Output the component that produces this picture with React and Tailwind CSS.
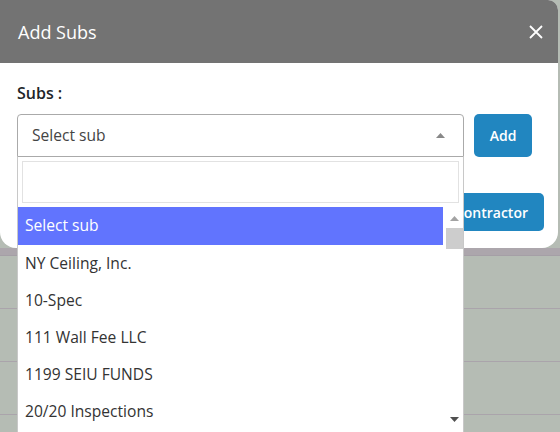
const subs = [
  "Select sub",
  "NY Ceiling, Inc.",
  "10-Spec",
  "111 Wall Fee LLC",
  "1199 SEIU FUNDS",
  "20/20 Inspections",
];

function ArrowUp({ color }) {
  return (
    <svg width="9" height="5" viewBox="0 0 9 5">
      <polygon points="4.5,0 9,5 0,5" fill={color} />
    </svg>
  );
}

function ArrowDown({ color }) {
  return (
    <svg width="9" height="5" viewBox="0 0 9 5">
      <polygon points="0,0 9,0 4.5,5" fill={color} />
    </svg>
  );
}

export default function App() {
  return (
    <div className="relative w-[560px] h-[432px] overflow-hidden bg-[#b5bcb4] font-['Open_Sans',sans-serif]">
      {/* page behind the modal */}
      <div className="h-[248px]" />
      <div className="h-[8px] bg-[#aca6ac] border-b border-[#a59fa6]" />
      {[0, 1, 2, 3].map((i) => (
        <div key={i} className="h-[53px] border-b border-[#aaa4ab]" />
      ))}

      {/* modal */}
      <div className="absolute left-0 top-0 w-[558px] h-[248px] bg-white rounded-tr-[10px] rounded-b-[16px] overflow-hidden">
        <div className="h-[63px] bg-[#737373] flex items-center justify-between pl-[18px] pr-[15px]">
          <h2 className="text-[18px] text-white leading-none">Add Subs</h2>
          <svg width="14" height="14" viewBox="0 0 14 14" className="mt-[1px]">
            <path d="M1 1L13 13M13 1L1 13" stroke="white" strokeWidth="1.8" />
          </svg>
        </div>

        <div className="px-[17px] pt-[20px]">
          <div className="text-[16px] leading-[21px] font-semibold text-[#212529] mb-[10px]">
            Subs :
          </div>
          <div className="flex gap-[10px]">
            <div className="w-[447px] h-[43px] border border-[#aaa] rounded-t-[4px] flex items-center justify-between pl-[14px] pr-[18px]">
              <span className="text-[15.6px] text-[#444]">Select sub</span>
              <ArrowUp color="#888" />
            </div>
            <button className="w-[58px] h-[43px] rounded-[5px] bg-[#2186c0] text-white text-[14px] font-semibold">
              Add
            </button>
          </div>
          <div className="mt-[36px] flex justify-end">
            <button className="h-[38px] px-[16px] -mr-[3px] rounded-[5px] bg-[#2186c0] text-white text-[14px] font-semibold">
              Add Subcontractor
            </button>
          </div>
        </div>
      </div>

      {/* open dropdown */}
      <div className="absolute left-[17px] top-[157px] w-[447px] h-[290px] bg-white border-x border-b border-[#c8c8c8]">
        <div className="p-[4px]">
          <div className="h-[42px] border border-[#e2e2e2]" />
        </div>
        <div className="flex h-[232px] overflow-hidden">
          <div className="flex-1">
            {subs.map((s, i) => (
              <div
                key={s}
                className={
                  i === 0
                    ? "h-[38px] flex items-center px-[7px] bg-[#6174fe] text-white text-[15.6px] font-medium"
                    : "h-[37px] flex items-center px-[7px] text-[#333] text-[15.6px]"
                }
              >
                {s}
              </div>
            ))}
          </div>
          <div className="w-[20px] flex flex-col items-center pl-[2px]">
            <div className="pt-[9px]">
              <ArrowUp color="#a3a3a3" />
            </div>
            <div className="mt-[7px] w-[17px] h-[21px] bg-[#cdcdcd]" />
            <div className="mt-auto pb-[17px]">
              <ArrowDown color="#505050" />
            </div>
          </div>
        </div>
      </div>
    </div>
  );
}
